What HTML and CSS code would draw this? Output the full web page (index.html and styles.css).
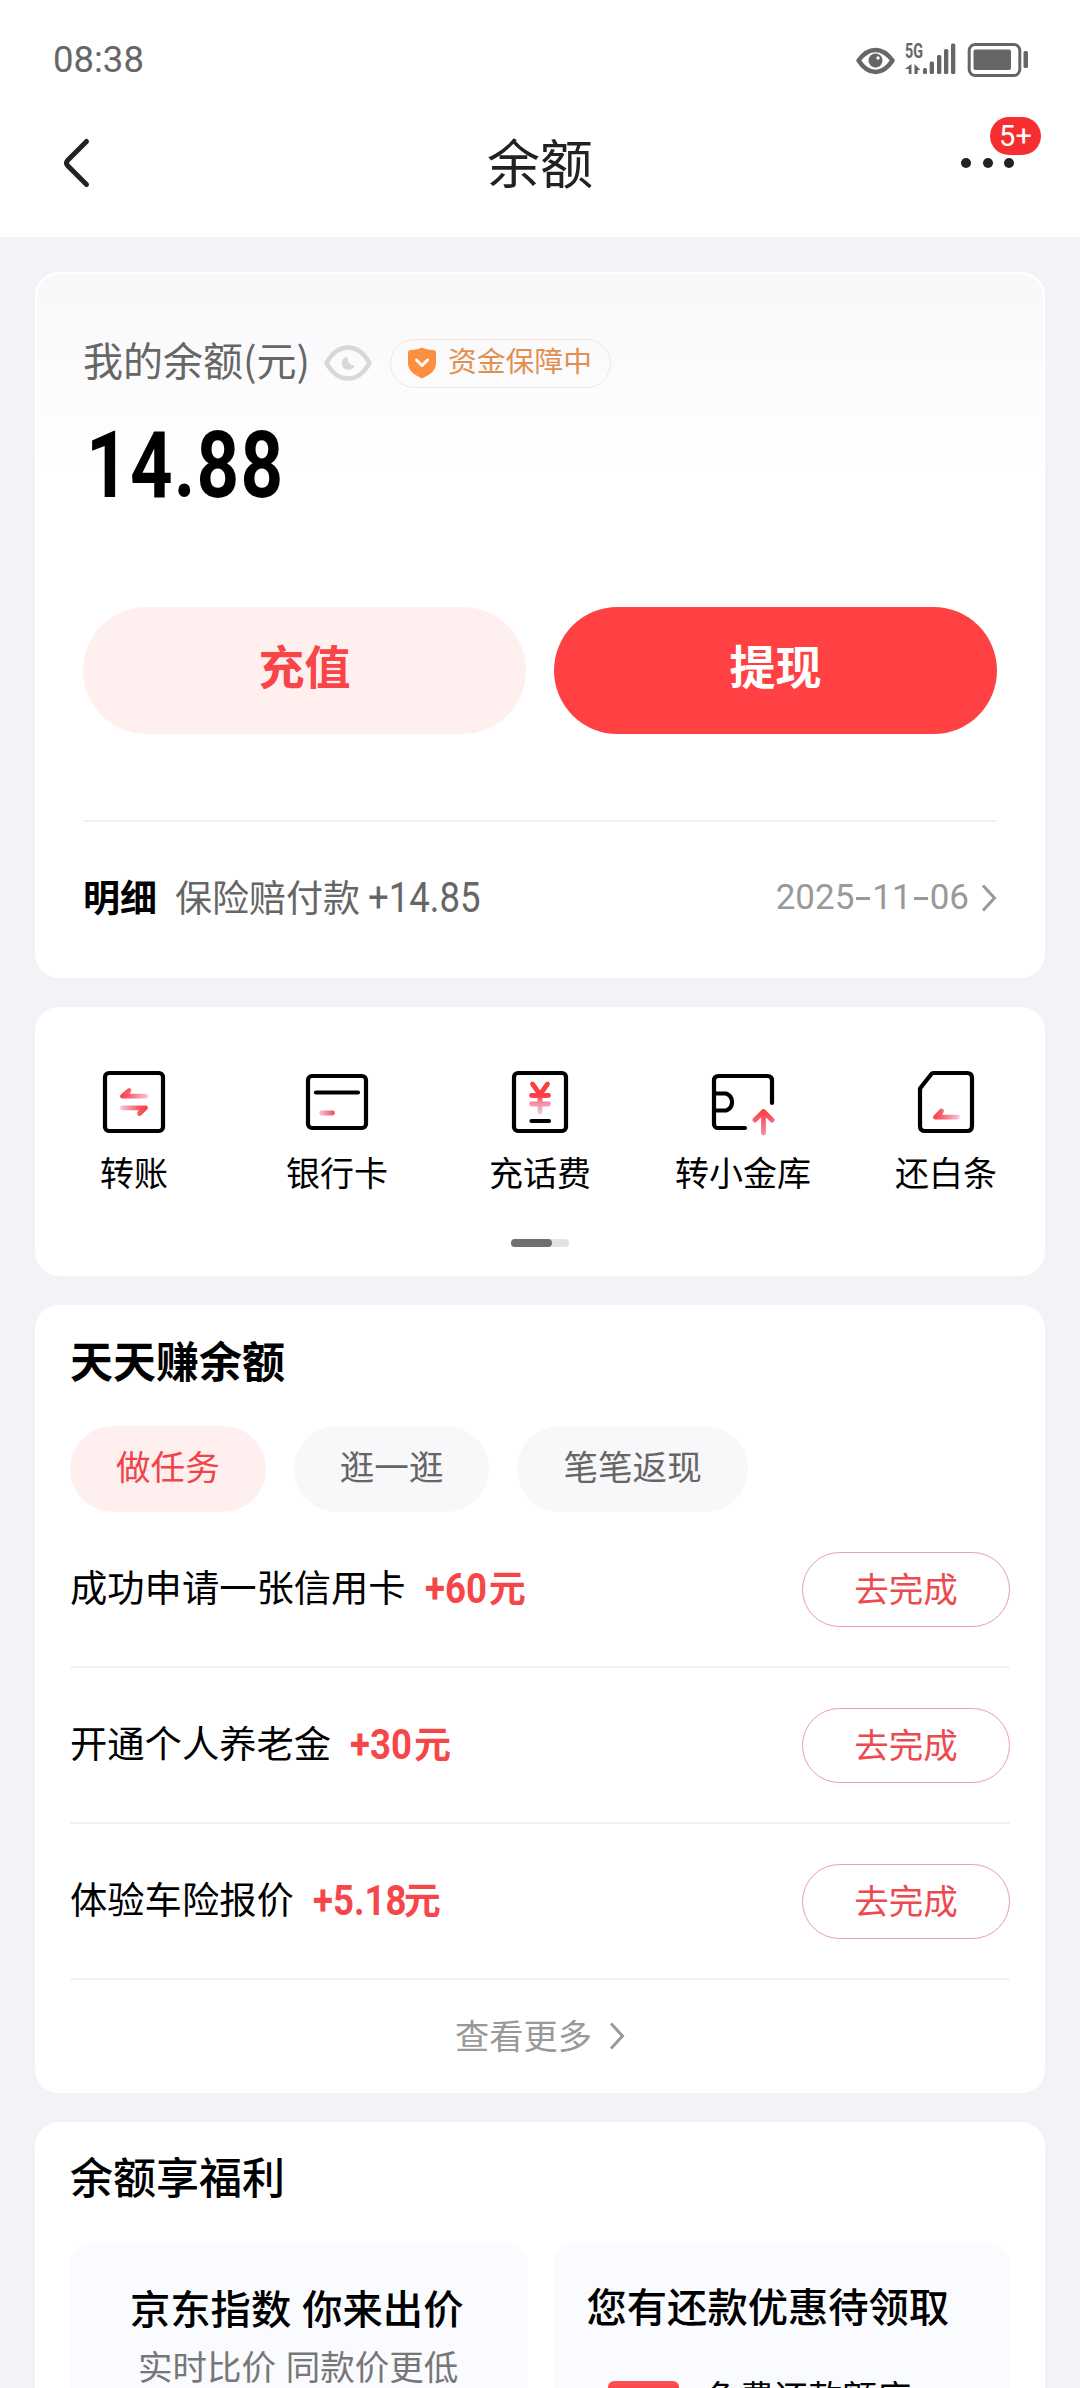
FILE: index.html
```html
<!DOCTYPE html>
<html lang="zh-CN">
<head>
<meta charset="utf-8">
<title>余额</title>
<link rel="stylesheet" href="styles.css">
</head>
<body>
<header class="top">
  <div class="status">
    <span class="clock">08:38</span>
    <svg class="status-icons" width="172" height="34" viewBox="856 43 172 34" fill="#666">
      <path d="M858.500 60.500Q866 50 875.500 50T892.500 60.500Q885 72 875.500 72T858.500 60.500Z" fill="none" stroke="#666" stroke-width="4.500" stroke-linejoin="round"/>
      <circle cx="875.500" cy="60.500" r="7"/><circle cx="878" cy="58" r="1.700" fill="#fff"/>
      <text class="net" x="905" y="57.500" textLength="18" lengthAdjust="spacingAndGlyphs">5G</text>
      <path d="M911.500 64v10h-2.700v-5h-4zM914.500 64l6 6h-2.700l-.3 4h-3z"/>
      <rect x="923" y="68" width="4" height="6" rx="1.500"/><rect x="929.700" y="61.500" width="4.300" height="12.500" rx="1.500"/><rect x="937" y="55" width="4.300" height="19" rx="1.500"/><rect x="944" y="49" width="4.300" height="25" rx="1.500"/><rect x="951" y="43.500" width="4.300" height="30.500" rx="1.500"/>
      <rect x="969.200" y="44.500" width="50.600" height="31" rx="6" fill="none" stroke="#666" stroke-width="3"/>
      <rect x="973.500" y="49.500" width="37.500" height="20.500" rx="2"/><rect x="1023.500" y="51" width="4.500" height="17" rx="1.500"/>
    </svg>
  </div>
  <nav class="nav">
    <svg class="back" width="26" height="50" viewBox="0 0 26 50" fill="none" stroke="#222" stroke-width="5" stroke-linecap="round" stroke-linejoin="round"><path d="M22.500 3.500L3.500 22.500Q1.500 25 3.500 27.500L22.500 46.500"/></svg>
    <h1 class="nav-title">余额</h1>
    <div class="more"><i class="dot"></i><i class="dot"></i><i class="dot"></i><b class="badge">5+</b></div>
  </nav>
</header>
<main class="page">
  <section class="card balance">
    <div class="label-row">
      <span class="label">我的余额(元)</span>
      <svg class="eye" width="48" height="36" viewBox="0 0 48 36"><path d="M2.500 18Q11 2.500 24 2.500T45.500 18Q37 33.500 24 33.500T2.500 18Z" fill="none" stroke="#d8d8d8" stroke-width="4.500" stroke-linejoin="round"/><path d="M23 11.700A6.600 6.600 0 1 0 30.500 20.500Q24 20.500 23 11.700Z" fill="#d8d8d8"/></svg>
      <span class="safe"><svg width="28" height="32" viewBox="0 0 28 32"><path d="M14 .500Q18 2.500 25.500 3Q28 3.300 28 5.500V17Q28 25.500 14 31.500Q0 25.500 0 17V5.500Q0 3.300 2.500 3Q10 2.500 14 .500Z" fill="#fd8f40"/><path d="M8.500 13l5.500 5.500 5.500-5.500" fill="none" stroke="#fff" stroke-width="3" stroke-linecap="round" stroke-linejoin="round"/></svg><span class="safe-text">资金保障中</span></span>
    </div>
    <div class="amount"><span class="narrow">14.88</span></div>
    <div class="actions"><button class="btn soft">充值</button><button class="btn solid">提现</button></div>
    <div class="detail">
      <b class="detail-title">明细</b><span class="detail-name">保险赔付款</span><span class="detail-sum narrow">+14.85</span>
      <span class="date">2025<i class="dash"></i>11<i class="dash"></i>06</span>
      <svg width="16" height="28" viewBox="0 0 16 28" fill="none" stroke="#999" stroke-width="3"><path d="M2 1.500L13.500 14 2 26.500"/></svg>
    </div>
  </section>

  <section class="card tools">
    <svg width="0" height="0" class="defs"><defs>
      <linearGradient id="toLeft" gradientUnits="userSpaceOnUse" x1="19" x2="46" y1="0" y2="0"><stop stop-color="#fb3b42"/><stop offset=".35" stop-color="#f8606c"/><stop offset="1" stop-color="#f7c3dc"/></linearGradient>
      <linearGradient id="toRight" gradientUnits="userSpaceOnUse" x1="46" x2="19" y1="0" y2="0"><stop stop-color="#fb3b42"/><stop offset=".35" stop-color="#f8606c"/><stop offset="1" stop-color="#f7c3dc"/></linearGradient>
      <linearGradient id="chip" gradientUnits="userSpaceOnUse" x1="31" x2="15" y1="0" y2="0"><stop stop-color="#e8505c"/><stop offset="1" stop-color="#f7c3dc"/></linearGradient>
      <linearGradient id="yuan" gradientUnits="userSpaceOnUse" x1="0" x2="0" y1="13" y2="45"><stop offset=".45" stop-color="#fb3f46"/><stop offset=".65" stop-color="#f58a9e"/><stop offset="1" stop-color="#f9c6dc"/></linearGradient>
      <linearGradient id="up" gradientUnits="userSpaceOnUse" x1="0" x2="0" y1="41" y2="66"><stop stop-color="#fb3b42"/><stop offset="1" stop-color="#f58fa6"/></linearGradient>
    </defs></svg>
    <ul class="tool-list">
      <li class="tool"><svg width="66" height="66" viewBox="0 0 66 66"><rect x="4" y="4" width="58" height="58" rx="4"/><path class="tint" stroke="url(#toLeft)" d="M44.500 27.200H21.500L28 21.500L25 26"/><path class="tint" stroke="url(#toRight)" d="M21.500 38.800H44.500L38.500 44.500L41 40"/></svg>转账</li>
      <li class="tool"><svg width="66" height="66" viewBox="0 0 66 66"><rect x="4" y="7" width="58" height="52" rx="4"/><path d="M12 23.500H54"/><path class="tint" stroke="url(#chip)" d="M17.500 44h11v.01"/></svg>银行卡</li>
      <li class="tool"><svg width="66" height="66" viewBox="0 0 66 66"><rect x="7" y="4" width="52" height="58" rx="4"/><path class="tint" stroke="url(#yuan)" d="M25.500 15l7.500 10.500L40.500 15M24.500 26.500H41.500v.01M24.500 35H41.500v.01M33 25.500L33.010 43"/><path d="M24.500 52H42"/></svg>充话费</li>
      <li class="tool"><svg width="66" height="66" viewBox="0 0 66 66"><path d="M35 59H8.500Q4 59 4 54.500V11.500Q4 7 8.500 7H57.500Q62 7 62 11.500V34M4 24.500H16a9 9 0 0 1 0 17H4"/><path class="tint" stroke="url(#up)" d="M45 51l8.500-8.500L62 51M53.500 43L53.510 64"/></svg>转小金库</li>
      <li class="tool"><svg width="66" height="66" viewBox="0 0 66 66"><path d="M20.500 4H54Q59 4 59 9V57Q59 62 54 62H12Q7 62 7 57V19.500L18 5.500Q19 4 20.500 4Z"/><path class="tint" stroke="url(#toLeft)" d="M44.500 48.200H22.500L28.500 42L26 46.500"/></svg>还白条</li>
    </ul>
    <div class="pager"><i class="pager-on"></i></div>
  </section>

  <section class="card earn">
    <h2 class="earn-title">天天赚余额</h2>
    <div class="tabs"><span class="tab on">做任务</span><span class="tab">逛一逛</span><span class="tab">笔笔返现</span></div>
    <div class="task"><span class="task-name">成功申请一张信用卡</span><b class="reward r60"><span class="narrow">+60</span><span class="unit">元</span></b><button class="go">去完成</button></div>
    <div class="task"><span class="task-name">开通个人养老金</span><b class="reward r30"><span class="narrow">+30</span><span class="unit">元</span></b><button class="go">去完成</button></div>
    <div class="task"><span class="task-name">体验车险报价</span><b class="reward r518"><span class="narrow">+5.18</span><span class="unit">元</span></b><button class="go">去完成</button></div>
    <div class="see-more">查看更多<svg width="16" height="28" viewBox="0 0 16 28" fill="none" stroke="#999" stroke-width="3"><path d="M2 1.500L13.500 14 2 26.500"/></svg></div>
  </section>

  <section class="card perks">
    <h2 class="perks-title">余额享福利</h2>
    <div class="perk-list">
      <div class="perk first"><h3 class="perk-title">京东指数 你来出价</h3><p class="perk-sub">实时比价 同款价更低</p></div>
      <div class="perk second"><h3 class="perk-title">您有还款优惠待领取</h3><div class="perk-row"><i class="thumb"></i>免费还款额度</div></div>
    </div>
  </section>
</main>
</body>
</html>
```
FILE: styles.css
```css
* { box-sizing: border-box; margin: 0; padding: 0; }
html, body { height: 2388px; overflow: hidden; }
body { background: #f2f2f7; color: #000; font-family: "Noto Sans CJK SC", "Noto Sans", sans-serif; font-weight: 400; }
i { font-style: normal; }
ul { list-style: none; }
svg { display: block; flex: none; overflow: visible; }
button { border: 0; background: none; font-family: inherit; }

.top { height: 237px; background: #fff; }
.status { display: flex; justify-content: space-between; align-items: center; height: 119px; padding: 0 52px 0 53px; }
.clock { font: 400 36.500px/40px Roboto, sans-serif; color: #666; }
.net { font: 700 20px Roboto, sans-serif; }
.nav { display: grid; grid-template-columns: 160px 1fr 160px; align-items: center; height: 88px; }
.back { margin-left: 64px; }
.nav-title { padding-bottom: 4px; text-align: center; font-size: 53px; font-weight: 400; line-height: 60px; color: #222; }
.more { position: relative; display: flex; gap: 11.5px; margin-left: 41px; }
.dot { width: 10px; height: 10px; border-radius: 5px; background: #222; }
.badge { position: absolute; left: 29px; top: -41px; width: 51px; height: 38px; border-radius: 19px; background: #f72e30; color: #fff; text-align: center; font: 400 29px/39px Roboto, sans-serif; }

.page { display: flex; flex-direction: column; gap: 29px; padding: 35px 35px 0; }
.card { flex: none; border-radius: 24px; background: #fff; }
.narrow { display: inline-block; font-family: Roboto, sans-serif; transform: scaleX(.87); transform-origin: left; white-space: nowrap; }

.balance { height: 706px; padding: 62px 46px 0 46px; border: 2px solid #fff; background: linear-gradient(#f8f8fb, #fff 200px); }
.label-row { display: flex; align-items: center; height: 54px; }
.label { width: 241px; padding-bottom: 8px; font-size: 40px; line-height: 54px; color: #666; white-space: nowrap; }
.safe { display: flex; align-items: center; gap: 12px; width: 221px; height: 49px; margin-left: 18px; padding-left: 17px; border: 1.5px solid #fbe2d6; border-radius: 25px; color: #e09150; white-space: nowrap; }
.safe-text { padding-bottom: 7px; font-size: 28.800px; line-height: 40px; }
.amount { height: 100px; margin-top: 17px; padding-left: 3px; font-size: 93px; line-height: 100px; font-weight: 700; }
.amount .narrow { transform: scaleX(.8); letter-spacing: 1.500px; }
.actions { display: grid; grid-template-columns: 1fr 1fr; gap: 28px; margin-top: 100px; }
.btn { height: 127px; border-radius: 64px; font-size: 46px; font-weight: 700; line-height: 115px; padding-bottom: 12px; }
.soft { background: #ffefef; color: #f94448; }
.solid { background: #ff4144; color: #fff; }
.detail { display: flex; align-items: center; height: 156px; margin-top: 86px; padding-bottom: 2px; border-top: 2px solid #f1f1f3; font-size: 37px; line-height: 50px; }
.detail-title { margin-right: 18px; padding-bottom: 4px; }
.detail-name { padding-bottom: 4px; color: #666; }
.detail-sum { width: 130px; margin-left: 8px; font-size: 42px; color: #666; }
.date { margin-left: auto; margin-right: 12px; display: flex; align-items: center; font: 400 35px/50px Roboto, sans-serif; color: #999; }
.dash { width: 14px; height: 3px; margin: 0 2px; background: #999; }

.tools { height: 269px; padding-top: 62px; }
.defs { position: absolute; }
.tool-list { display: flex; justify-content: space-between; margin: 0 -2.500px; }
.tool { display: flex; flex-direction: column; align-items: center; width: 203px; font-size: 34px; line-height: 50px; gap: 12px; white-space: nowrap; }
.tool svg { fill: none; stroke: #000; stroke-width: 4.200; stroke-linecap: round; stroke-linejoin: round; }
.tint { stroke-width: 4.800; }
.pager { width: 58px; height: 8px; margin: 42px auto 0; border-radius: 4px; background: #e3e3e3; }
.pager-on { display: block; width: 41px; height: 8px; border-radius: 4px; background: #707070; }

.earn { height: 788px; padding: 0 35px; }
.earn-title { padding-top: 23px; font-size: 43px; line-height: 62px; font-weight: 700; }
.tabs { display: flex; gap: 28px; margin-top: 36px; }
.tab { height: 86px; padding: 0 46px; border-radius: 43px; background: #f8f8fa; color: #666; font-size: 34.600px; line-height: 79px; }
.tab.on { background: #ffefef; color: #f04449; }
.task { display: flex; align-items: center; height: 156px; border-bottom: 2px solid #f3f3f5; font-size: 37.300px; line-height: 50px; }
.task-name { padding-bottom: 6px; }
.reward { display: flex; align-items: center; margin-left: 19px; color: #f5474a; font-size: 37px; }
.reward .narrow { width: 64px; font-size: 42px; padding-bottom: 1px; }
.reward.r518 .narrow { width: 91px; }
.unit { padding-bottom: 6px; }
.go { width: 208px; height: 75px; margin-left: auto; border: 1.500px solid #ea9fa4; border-radius: 38px; color: #ec4a4f; font-size: 34.500px; line-height: 66px; padding-bottom: 4px; }
.see-more { display: flex; justify-content: center; align-items: center; gap: 17px; height: 108px; color: #999; font-size: 34.200px; }
.see-more svg { margin-top: 3px; }

.perks { height: 320px; padding: 0 35px; }
.perks-title { padding-top: 22px; font-size: 43px; line-height: 62px; font-weight: 500; }
.perk-list { display: grid; grid-template-columns: 1fr 1fr; gap: 25px; margin-top: 37px; }
.perk { height: 190px; border-radius: 22px; background: #fafbfe; white-space: nowrap; }
.first { padding: 36px 0 0 60px; }
.second { padding: 34px 0 0 34px; }
.perk-title { font-size: 40.300px; line-height: 56px; font-weight: 500; }
.first .perk-title { word-spacing: 2px; }
.perk-sub { padding-left: 8px; font-size: 34.500px; line-height: 52px; color: #777; margin-top: 4px; word-spacing: 2px; }
.perk-row { display: flex; align-items: flex-start; gap: 27px; margin-top: 37px; padding-left: 21px; font-size: 34.300px; line-height: 50px; }
.thumb { width: 71px; height: 60px; margin-top: 11px; border-radius: 6px; background: linear-gradient(#f9545b, #ff3a42 12px); }
```
